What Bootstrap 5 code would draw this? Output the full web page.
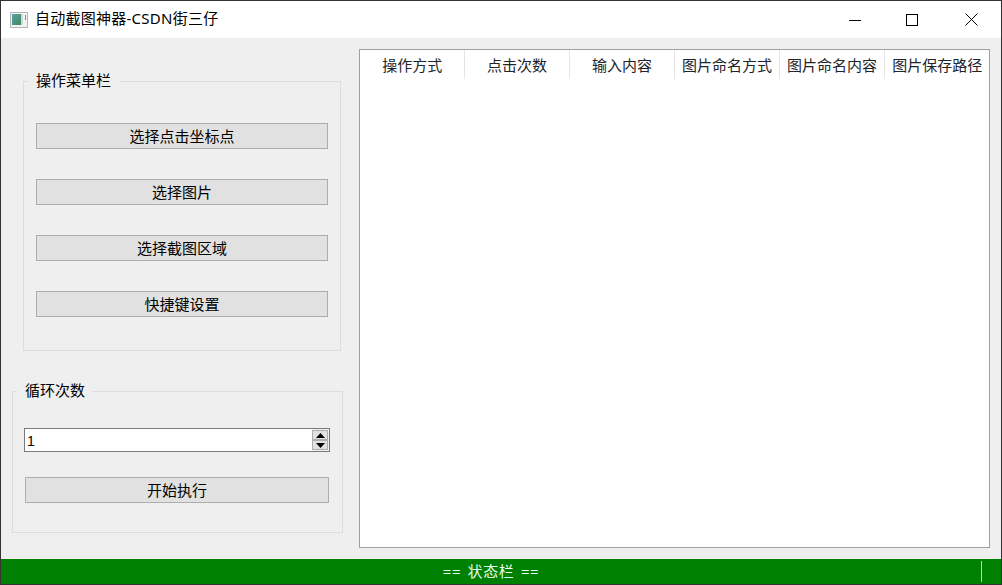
<!DOCTYPE html>
<html lang="zh-CN">
<head>
  <meta charset="UTF-8">
  <meta name="viewport" content="width=device-width, initial-scale=1.0">
  <title>自动截图神器-CSDN街三仔</title>
  <link href="https://cdn.jsdelivr.net/npm/bootstrap@5.3.2/dist/css/bootstrap.min.css" rel="stylesheet">
  <style>
    html, body {
      height: 100%;
      margin: 0;
      overflow: hidden;
    }

    body {
      font-family: "Noto Sans", "Noto Sans CJK SC", sans-serif;
      font-size: 15px;
      color: #000;
      background-color: #efefef;
    }

    .app-window {
      height: 585px;
      border: 1px solid #333;
    }

    .title-bar {
      height: 37px;
      background-color: #fff;
    }

    .title-icon {
      margin-left: 9px;
      margin-right: 7px;
    }

    .title-text {
      line-height: 37px;
      letter-spacing: 0.25px;
      position: relative;
      top: -1px;
    }

    .win-btn {
      width: 58.5px;
      height: 37px;
    }

    .win-btn-max {
      padding-right: 2px;
    }

    .side-panel {
      width: 358px;
    }

    .group-one {
      width: 318px;
      height: 270px;
      margin: 43px 0 0 22px;
      padding: 41px 12px 0 12px;
    }

    .group-two {
      width: 331px;
      height: 142px;
      margin: 40px 0 0 11px;
      padding: 36px 12px 0 11px;
    }

    .group-box {
      position: relative;
      border: 1px solid #dcdcdc;
    }

    .group-label {
      position: absolute;
      top: -12px;
      left: 4px;
      padding: 0 8px;
      line-height: 21px;
      background-color: #efefef;
    }

    .btn.qt-btn {
      display: block;
      width: 292px;
      height: 26px;
      padding: 0;
      margin-bottom: 30px;
      font-size: 15px;
      line-height: 22px;
      color: #000;
      background-color: #e1e1e1;
      border: 1px solid #adadad;
      border-radius: 0;
    }

    .btn.qt-btn.start-btn {
      width: 304px;
      margin: 25px 0 0 1px;
    }

    .spin-box {
      width: 306px;
      height: 24px;
      background-color: #fff;
      border: 1px solid #7a7a7a;
    }

    .spin-value {
      padding-left: 2px;
      line-height: 24px;
      font-family: "Liberation Sans", sans-serif;
      font-size: 14px;
    }

    .spin-arrows {
      width: 17px;
      padding: 1px 1px 1px 0;
      background-color: #f0f0f0;
    }

    .spin-arrow {
      height: 10px;
      background-color: #e1e1e1;
      border: 1px solid #adadad;
    }

    .table-panel {
      width: 631px;
      height: 499px;
      margin: 11px 0 0 0;
      background-color: #fff;
      border: 1px solid #a0a0a0;
    }

    .table.op-table {
      width: 629px;
      table-layout: fixed;
      margin: 0;
    }

    .table.op-table th {
      width: 105px;
      height: 29px;
      padding: 1px 0 0 1px;
      font-weight: 400;
      font-size: 15px;
      line-height: 28px;
      text-align: center;
      border: 0;
      border-right: 1px solid #e5e5e5;
      white-space: nowrap;
    }

    .table.op-table th:first-child {
      width: 104px;
    }

    .table.op-table th:last-child {
      border-right: 0;
    }

    .status-bar {
      height: 25px;
      margin-top: 11px;
      color: #e6fff6;
      font-size: 15px;
      background-color: #008000;
    }

    .status-text {
      line-height: 25px;
      letter-spacing: 0.6px;
      word-spacing: 2px;
    }

    .status-grip {
      width: 1px;
      height: 21px;
      margin-right: 19px;
      background-color: #b5dcb5;
    }
  </style>
</head>
<body>

  <div class="app-window d-flex flex-column">

    <div class="title-bar d-flex align-items-center">
      <svg class="title-icon" width="18" height="16" viewBox="0 0 18 16">
        <defs>
          <linearGradient id="ico" x1="0" y1="0" x2="1" y2="1">
            <stop offset="0" stop-color="#5f9fa8"/>
            <stop offset="1" stop-color="#3f8a5a"/>
          </linearGradient>
        </defs>
        <rect x="0.5" y="0.5" width="17" height="15" fill="#f2f2f2" stroke="#b4b4b4"/>
        <rect x="2" y="2" width="9" height="11" fill="url(#ico)"/>
        <rect x="11" y="2" width="2" height="11" fill="#cfdcd8"/>
        <rect x="15" y="3" width="1" height="5" fill="#5f9fa8"/>
      </svg>
      <span class="title-text flex-grow-1">自动截图神器-CSDN街三仔</span>
      <div class="win-btn d-flex align-items-center justify-content-center">
        <svg width="12" height="12" viewBox="0 0 12 12"><path d="M0 6.5H12" stroke="#000" fill="none"/></svg>
      </div>
      <div class="win-btn win-btn-max d-flex align-items-center justify-content-center">
        <svg width="12" height="12" viewBox="0 0 12 12"><rect x="0.5" y="0.5" width="11" height="11" stroke="#000" fill="none"/></svg>
      </div>
      <div class="win-btn d-flex align-items-center justify-content-center">
        <svg width="13" height="13" viewBox="0 0 13 13"><path d="M0.5 0.5L12.5 12.5M12.5 0.5L0.5 12.5" stroke="#000" fill="none"/></svg>
      </div>
    </div>

    <div class="d-flex">
      <div class="side-panel">
        <div class="group-box group-one">
          <span class="group-label">操作菜单栏</span>
          <button class="btn qt-btn" type="button">选择点击坐标点</button>
          <button class="btn qt-btn" type="button">选择图片</button>
          <button class="btn qt-btn" type="button">选择截图区域</button>
          <button class="btn qt-btn" type="button">快捷键设置</button>
        </div>
        <div class="group-box group-two">
          <span class="group-label">循环次数</span>
          <div class="spin-box d-flex">
            <div class="spin-value flex-grow-1">1</div>
            <div class="spin-arrows d-flex flex-column">
              <div class="spin-arrow d-flex align-items-center justify-content-center">
                <svg width="9" height="5" viewBox="0 0 9 5"><path d="M4.5 0L9 5H0Z" fill="#000"/></svg>
              </div>
              <div class="spin-arrow d-flex align-items-center justify-content-center">
                <svg width="9" height="5" viewBox="0 0 9 5"><path d="M0 0H9L4.5 5Z" fill="#000"/></svg>
              </div>
            </div>
          </div>
          <button class="btn qt-btn start-btn" type="button">开始执行</button>
        </div>
      </div>

      <div class="table-panel">
        <table class="table op-table">
          <thead>
            <tr>
              <th>操作方式</th>
              <th>点击次数</th>
              <th>输入内容</th>
              <th>图片命名方式</th>
              <th>图片命名内容</th>
              <th>图片保存路径</th>
            </tr>
          </thead>
        </table>
      </div>
    </div>

    <div class="status-bar d-flex align-items-center">
      <div class="status-text flex-grow-1 text-center">== 状态栏 ==</div>
      <div class="status-grip"></div>
    </div>
  </div>

  <script src="https://cdn.jsdelivr.net/npm/bootstrap@5.3.2/dist/js/bootstrap.bundle.min.js"></script>
</body>
</html>
